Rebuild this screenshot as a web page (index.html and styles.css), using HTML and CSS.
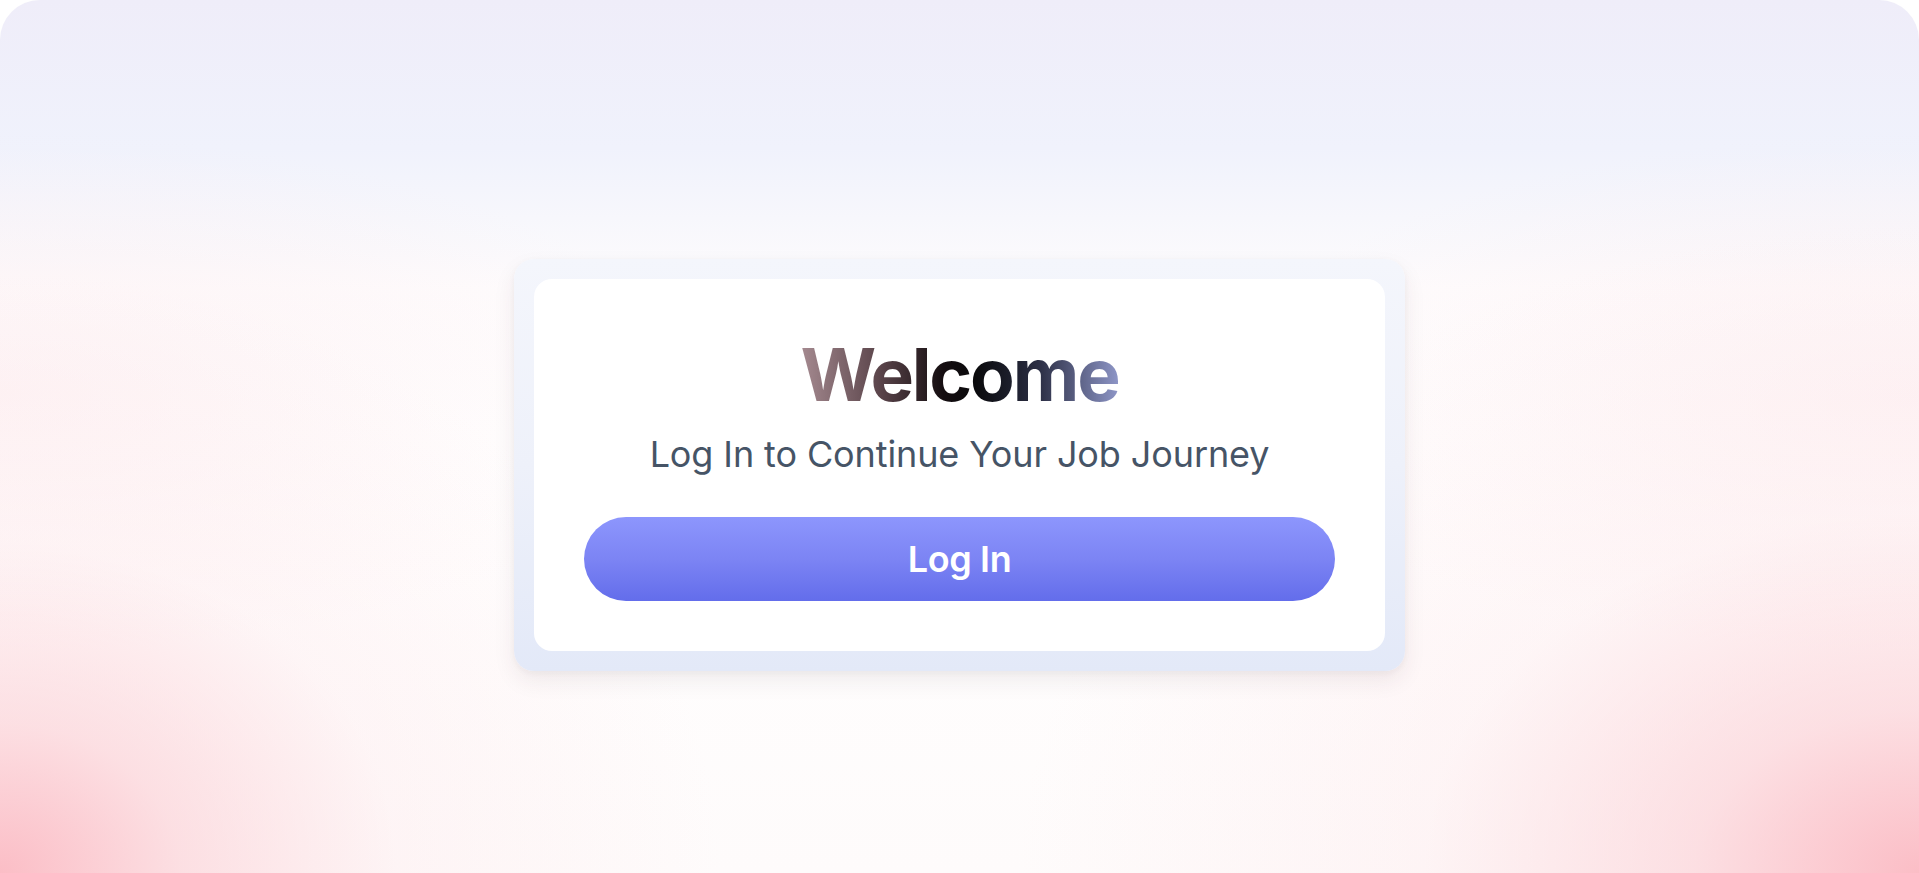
FILE: index.html
```html
<!DOCTYPE html>
<html lang="en">
<head>
<meta charset="utf-8">
<title>Welcome</title>
<link rel="stylesheet" href="styles.css">
</head>
<body>
<main class="page">
  <section class="card-frame">
    <div class="card">
      <h1 class="title">Welcome</h1>
      <p class="subtitle">Log In to Continue Your Job Journey</p>
      <button class="login-btn" type="button">Log In</button>
    </div>
  </section>
</main>
</body>
</html>
```

FILE: styles.css
```css
* { box-sizing: border-box; }

html, body {
  margin: 0;
  padding: 0;
  background: #ffffff;
  overflow: hidden;
}

body {
  font-family: Inter, "Noto Sans", "Liberation Sans", sans-serif;
}

.page {
  height: 873px;
  border-radius: 40px 40px 0 0;
  display: flex;
  justify-content: center;
  align-items: center;
  padding-top: 56px;
  background:
    radial-gradient(ellipse 720px 600px at 0% 100%, rgba(251, 186, 195, 0.95) 0%, rgba(251, 204, 210, 0.6) 25%, rgba(253, 228, 231, 0.3) 55%, rgba(255, 255, 255, 0) 100%),
    radial-gradient(ellipse 900px 650px at 100% 100%, rgba(251, 186, 195, 0.95) 0%, rgba(251, 204, 210, 0.6) 25%, rgba(253, 228, 231, 0.3) 55%, rgba(255, 255, 255, 0) 100%),
    radial-gradient(ellipse 700px 260px at 0% 45%, rgba(252, 232, 235, 0.5) 0%, rgba(255, 255, 255, 0) 100%),
    radial-gradient(ellipse 700px 260px at 100% 45%, rgba(252, 232, 235, 0.5) 0%, rgba(255, 255, 255, 0) 100%),
    linear-gradient(to bottom, #efedf9 0%, #f0f2fc 17%, #f7f7fc 25%, #fefcfd 33%, #ffffff 50%, #fefbfb 100%);
}

.card-frame {
  width: 891px;
  padding: 20px;
  border-radius: 20px;
  background: linear-gradient(to bottom, #f4f6fc 0%, #eef1fa 50%, #e3e9f8 100%);
  box-shadow: 0 10px 22px rgba(60, 40, 50, 0.08), 0 2px 6px rgba(60, 40, 50, 0.04);
}

.card {
  background: #ffffff;
  border-radius: 18px;
  padding: 52px 50px 50px;
  display: flex;
  flex-direction: column;
  align-items: stretch;
  text-align: center;
}

.title {
  margin: 0;
  font-size: 73px;
  line-height: 88px;
  font-weight: 700;
  letter-spacing: -0.03em;
  align-self: center;
  background: linear-gradient(to right, #a58a90 0%, #5a444a 25%, #140d10 45%, #0a0a0c 55%, #2b2e44 75%, #8d95c6 100%);
  -webkit-background-clip: text;
  background-clip: text;
  color: transparent;
}

.subtitle {
  margin: 13px 0 0;
  font-size: 36px;
  line-height: 44px;
  font-weight: 400;
  color: #465466;
  letter-spacing: -0.003em;
}

.login-btn {
  margin-top: 41px;
  height: 84px;
  border: none;
  border-radius: 42px;
  background: linear-gradient(to bottom, #8d96fd 0%, #7c84f4 50%, #636deb 100%);
  color: #ffffff;
  font-family: Inter, "Noto Sans", "Liberation Sans", sans-serif;
  font-size: 36px;
  font-weight: 600;
  letter-spacing: -0.01em;
  cursor: pointer;
}
```
